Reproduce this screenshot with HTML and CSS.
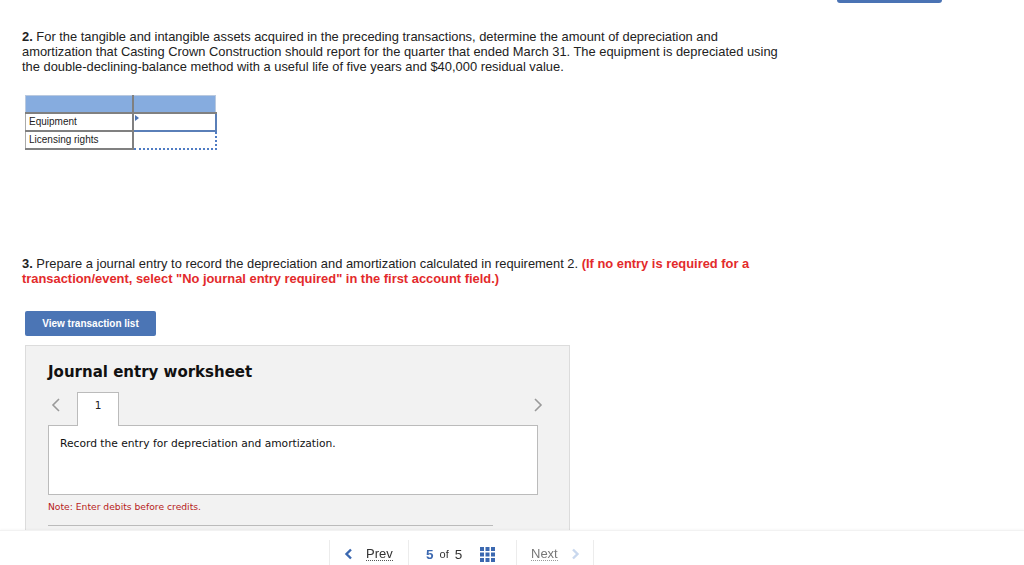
FILE: index.html
```html
<!DOCTYPE html>
<html>
<head>
<meta charset="utf-8">
<link rel="stylesheet" href="styles.css">
</head>
<body>
<div class="topbar"><div class="topbtn"></div></div>
<main class="page">
  <p class="q q2"><span class="num">2.</span> For the tangible and intangible assets acquired in the preceding transactions, determine the amount of depreciation and amortization that Casting Crown Construction should report for the quarter that ended March 31. The equipment is depreciated using the double-declining-balance method with a useful life of five years and $40,000 residual value.</p>

  <table class="grid">
    <tr class="hdr"><th class="c1"></th><th class="c2"></th></tr>
    <tr><td class="c1">Equipment</td><td class="c2 inp active"><span class="mark"></span></td></tr>
    <tr><td class="c1">Licensing rights</td><td class="c2 inp dotted"></td></tr>
  </table>

  <p class="q q3"><span class="num">3.</span> Prepare a journal entry to record the depreciation and amortization calculated in requirement 2. <span class="red">(If no entry is required for a transaction/event, select "No journal entry required" in the first account field.)</span></p>

  <button class="viewbtn">View transaction list</button>

  <section class="panel">
    <h2 class="ptitle">Journal entry worksheet</h2>
    <div class="tabs">
      <svg class="chev left" width="10" height="14" viewBox="0 0 10 14"><path d="M8 1 L2 7 L8 13" fill="none" stroke="#9a9a9a" stroke-width="1.6"/></svg>
      <div class="tab">1</div>
      <svg class="chev right" width="10" height="14" viewBox="0 0 10 14"><path d="M2 1 L8 7 L2 13" fill="none" stroke="#9a9a9a" stroke-width="1.6"/></svg>
    </div>
    <div class="instr">Record the entry for depreciation and amortization.</div>
    <div class="note">Note: Enter debits before credits.</div>
    <div class="rule"></div>
  </section>
</main>

<footer class="footer">
  <nav class="pager">
    <div class="seg prev">
      <svg width="9" height="12" viewBox="0 0 9 12"><path d="M7 1.5 L2.5 6 L7 10.5" fill="none" stroke="#3b68b0" stroke-width="2.4"/></svg>
      <span class="lnk">Prev</span>
    </div>
    <div class="seg count">
      <span class="cur">5</span><span class="of">of</span><span class="tot">5</span>
      <svg class="gridic" width="15" height="15" viewBox="0 0 15 15">
        <rect x="0" y="0" width="4" height="4" fill="#3b68b0"/><rect x="5.5" y="0" width="4" height="4" fill="#3b68b0"/><rect x="11" y="0" width="4" height="4" fill="#3b68b0"/>
        <rect x="0" y="5.5" width="4" height="4" fill="#3b68b0"/><rect x="5.5" y="5.5" width="4" height="4" fill="#3b68b0"/><rect x="11" y="5.5" width="4" height="4" fill="#3b68b0"/>
        <rect x="0" y="11" width="4" height="4" fill="#3b68b0"/><rect x="5.5" y="11" width="4" height="4" fill="#3b68b0"/><rect x="11" y="11" width="4" height="4" fill="#3b68b0"/>
      </svg>
    </div>
    <div class="seg next">
      <span class="lnk dim">Next</span>
      <svg width="9" height="12" viewBox="0 0 9 12"><path d="M2 1.5 L6.5 6 L2 10.5" fill="none" stroke="#c9d8ee" stroke-width="2.4"/></svg>
    </div>
  </nav>
</footer>
</body>
</html>
```

FILE: styles.css
```css
* { box-sizing: border-box; }
html, body { margin: 0; padding: 0; background: #fff; }
body { font-family: "Liberation Sans", Arial, sans-serif; color: #222; width: 1024px; height: 565px; overflow: hidden; }

.topbar { display: flex; justify-content: flex-end; padding-right: 82px; height: 3px; }
.topbtn { width: 105px; height: 3px; background: #4a73b4; border-radius: 0 0 3px 3px; }

.page { padding-left: 22px; }

.q { margin: 0; font-size: 12.9px; line-height: 15px; color: #222; }
.num { font-weight: bold; }
.q2 { margin-top: 26px; width: 758px; }
.q3 { margin-top: 106px; width: 770px; }
.red { color: #e32a2b; font-weight: bold; }

.grid { margin: 21px 0 0 3px; border-collapse: collapse; font-size: 10px; }
.grid th, .grid td { padding: 0; }
.grid th { height: 17px; }
.grid td { height: 18px; }
.grid .c1 { width: 107px; }
.grid .c2 { width: 83px; }
.hdr th { background: #86acdf; border: 1px solid #b9c9df; border-bottom: 2px solid #808080; }
.hdr th.c1 { border-right: 2px solid #808080; }
.grid td.c1 { border-left: 1px solid #aaa; border-bottom: 2px solid #808080; border-right: 2px solid #808080; padding-left: 3px; color: #222; }
.grid td.inp { position: relative; }
.grid td.active { border: 2px solid #5a7fb8; border-left: 1px solid #5a7fb8; }
.grid td.dotted { border: 2px dotted #4f7cc4; border-left-width: 1px; }
.mark { position: absolute; left: 1px; top: 1px; width: 0; height: 0; border-top: 3px solid transparent; border-bottom: 3px solid transparent; border-left: 4px solid #4a73b4; }

.viewbtn { display: block; margin: 25px 0 0 3px; width: 131px; height: 25px; background: #4b75b5; color: #fff; border: none; border-radius: 2px; font-family: "Liberation Sans", Arial, sans-serif; font-size: 10px; font-weight: bold; padding: 0; }

.panel { margin: 9px 0 0 3px; width: 545px; height: 200px; background: #f2f2f2; border: 1px solid #dcdcdc; padding: 16px 0 0 22px; }
.ptitle { margin: 0; font-family: "DejaVu Sans", Verdana, sans-serif; font-size: 15px; font-weight: bold; color: #111; line-height: 20px; }
.tabs { display: flex; align-items: flex-start; margin-top: 10px; height: 34px; width: 490px; }
.chev.left { margin: 6px 0 0 3px; }
.tab { margin-left: 16px; width: 42px; height: 34px; background: #fff; border: 1px solid #bbb; border-bottom: none; font-family: "DejaVu Sans", Verdana, sans-serif; font-size: 10.5px; text-align: center; padding-top: 6px; position: relative; z-index: 1; }
.chev.right { margin: 6px -5px 0 auto; }
.instr { margin-top: -1px; width: 490px; height: 70px; background: #fff; border: 1px solid #bbb; font-family: "DejaVu Sans", Verdana, sans-serif; font-size: 10.7px; color: #111; padding: 11px 0 0 11px; }
.note { margin-top: 6px; font-family: "DejaVu Sans", Verdana, sans-serif; font-size: 9.2px; color: #b71c1c; }
.rule { margin-top: 13px; width: 445px; height: 1px; background: #bbb; }

.footer { position: fixed; left: 0; right: 0; bottom: 0; height: 35px; background: #fff; border-top: 1px solid #f2f2f2; box-shadow: 0 -1px 2px rgba(0,0,0,0.03); }
.pager { display: flex; margin-left: 329px; height: 100%; padding-top: 9px; }
.seg { display: flex; align-items: center; border-left: 1px solid #ececec; height: 28px; }
.seg.prev { width: 79px; padding-left: 14px; gap: 13px; }
.seg.count { width: 108px; padding-left: 17px; }
.seg.next { width: 78px; padding-left: 14px; gap: 13px; border-right: 1px solid #ececec; }
.lnk { font-family: "Liberation Sans", Arial, sans-serif; font-size: 13px; color: #333; border-bottom: 1px dotted #555; line-height: 13px; }
.lnk.dim { color: #777; border-bottom-color: #999; }
.cur { color: #3b68b0; font-weight: bold; font-size: 13.5px; }
.of { font-size: 11px; color: #333; margin: 0 6px; }
.tot { font-size: 13.5px; color: #333; }
.gridic { margin-left: 18px; }
```
